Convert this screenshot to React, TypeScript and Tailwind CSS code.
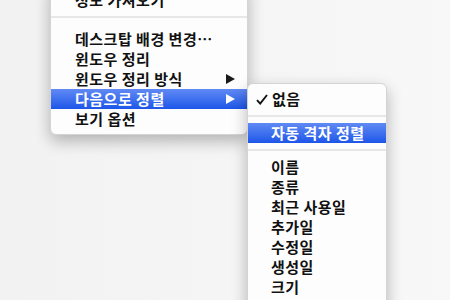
type Item = { label: string; arrow?: boolean; active?: boolean; check?: boolean }

const mainItems: Item[] = [
  { label: "데스크탑 배경 변경…" },
  { label: "윈도우 정리" },
  { label: "윈도우 정리 방식", arrow: true },
  { label: "다음으로 정렬", arrow: true, active: true },
  { label: "보기 옵션" },
]

const sortItems = ["이름", "종류", "최근 사용일", "추가일", "수정일", "생성일", "크기", "태그"]

function Arrow({ white }: { white?: boolean }) {
  return (
    <svg width="9" height="10" viewBox="0 0 9 10" className="shrink-0">
      <polygon points="0,0 9,5 0,10" fill={white ? "#ffffff" : "#1a1a1a"} />
    </svg>
  )
}

function Check() {
  return (
    <svg width="12" height="11" viewBox="0 0 12 11" className="shrink-0">
      <path d="M1 6.2 L4.2 9.6 L11 1" fill="none" stroke="#111" strokeWidth="1.9" />
    </svg>
  )
}

function Row({ item, pl }: { item: Item; pl: string }) {
  return (
    <div
      className={`flex h-[20px] items-center justify-between pr-[12px] ${pl} ${
        item.active ? "bg-gradient-to-b from-[#6089f4] to-[#1c55e8] text-white" : "text-[#111]"
      }`}
    >
      <span className="-mt-[2px] leading-none">{item.label}</span>
      {item.arrow && <Arrow white={item.active} />}
    </div>
  )
}

function Separator({ className }: { className: string }) {
  return (
    <div className={className}>
      <div className="h-[2px] bg-[#e7e7e7]" />
    </div>
  )
}

export default function App() {
  return (
    <div
      className="flex h-[300px] w-[450px] items-start overflow-hidden bg-gradient-to-r from-[#f2f2f2] to-[#f8f8f8] pl-[50px] text-[15px] font-semibold tracking-[0.5px]"
      style={{ fontFamily: '"Noto Sans CJK KR", "Noto Sans", sans-serif' }}
    >
      <div className="relative z-0 -mt-[16px] w-[198px] rounded-b-[6px] border border-[#d4d4d4] bg-[#fdfdfd] pb-[5px] pt-[5px] shadow-[0_6px_16px_rgba(0,0,0,0.28)]">
        <Row item={{ label: "정보 가져오기" }} pl="pl-[24px]" />
        <Separator className="pb-[11px] pt-[6px]" />
        {mainItems.map((item) => (
          <Row key={item.label} item={item} pl="pl-[24px]" />
        ))}
      </div>
      <div className="relative z-10 -ml-[1px] mt-[83px] w-[140px] rounded-t-[6px] border border-[#d4d4d4] bg-[#fdfdfd] pt-[5px] shadow-[0_6px_16px_rgba(0,0,0,0.28)]">
        <div className="flex h-[20px] items-center pl-[8px] text-[#111]">
          <Check />
          <span className="-mt-[2px] ml-[4px] leading-none">없음</span>
        </div>
        <Separator className="py-[6px]" />
        <Row item={{ label: "자동 격자 정렬", active: true }} pl="pl-[23px]" />
        <Separator className="py-[6px]" />
        {sortItems.map((label) => (
          <Row key={label} item={{ label }} pl="pl-[23px]" />
        ))}
      </div>
    </div>
  )
}
